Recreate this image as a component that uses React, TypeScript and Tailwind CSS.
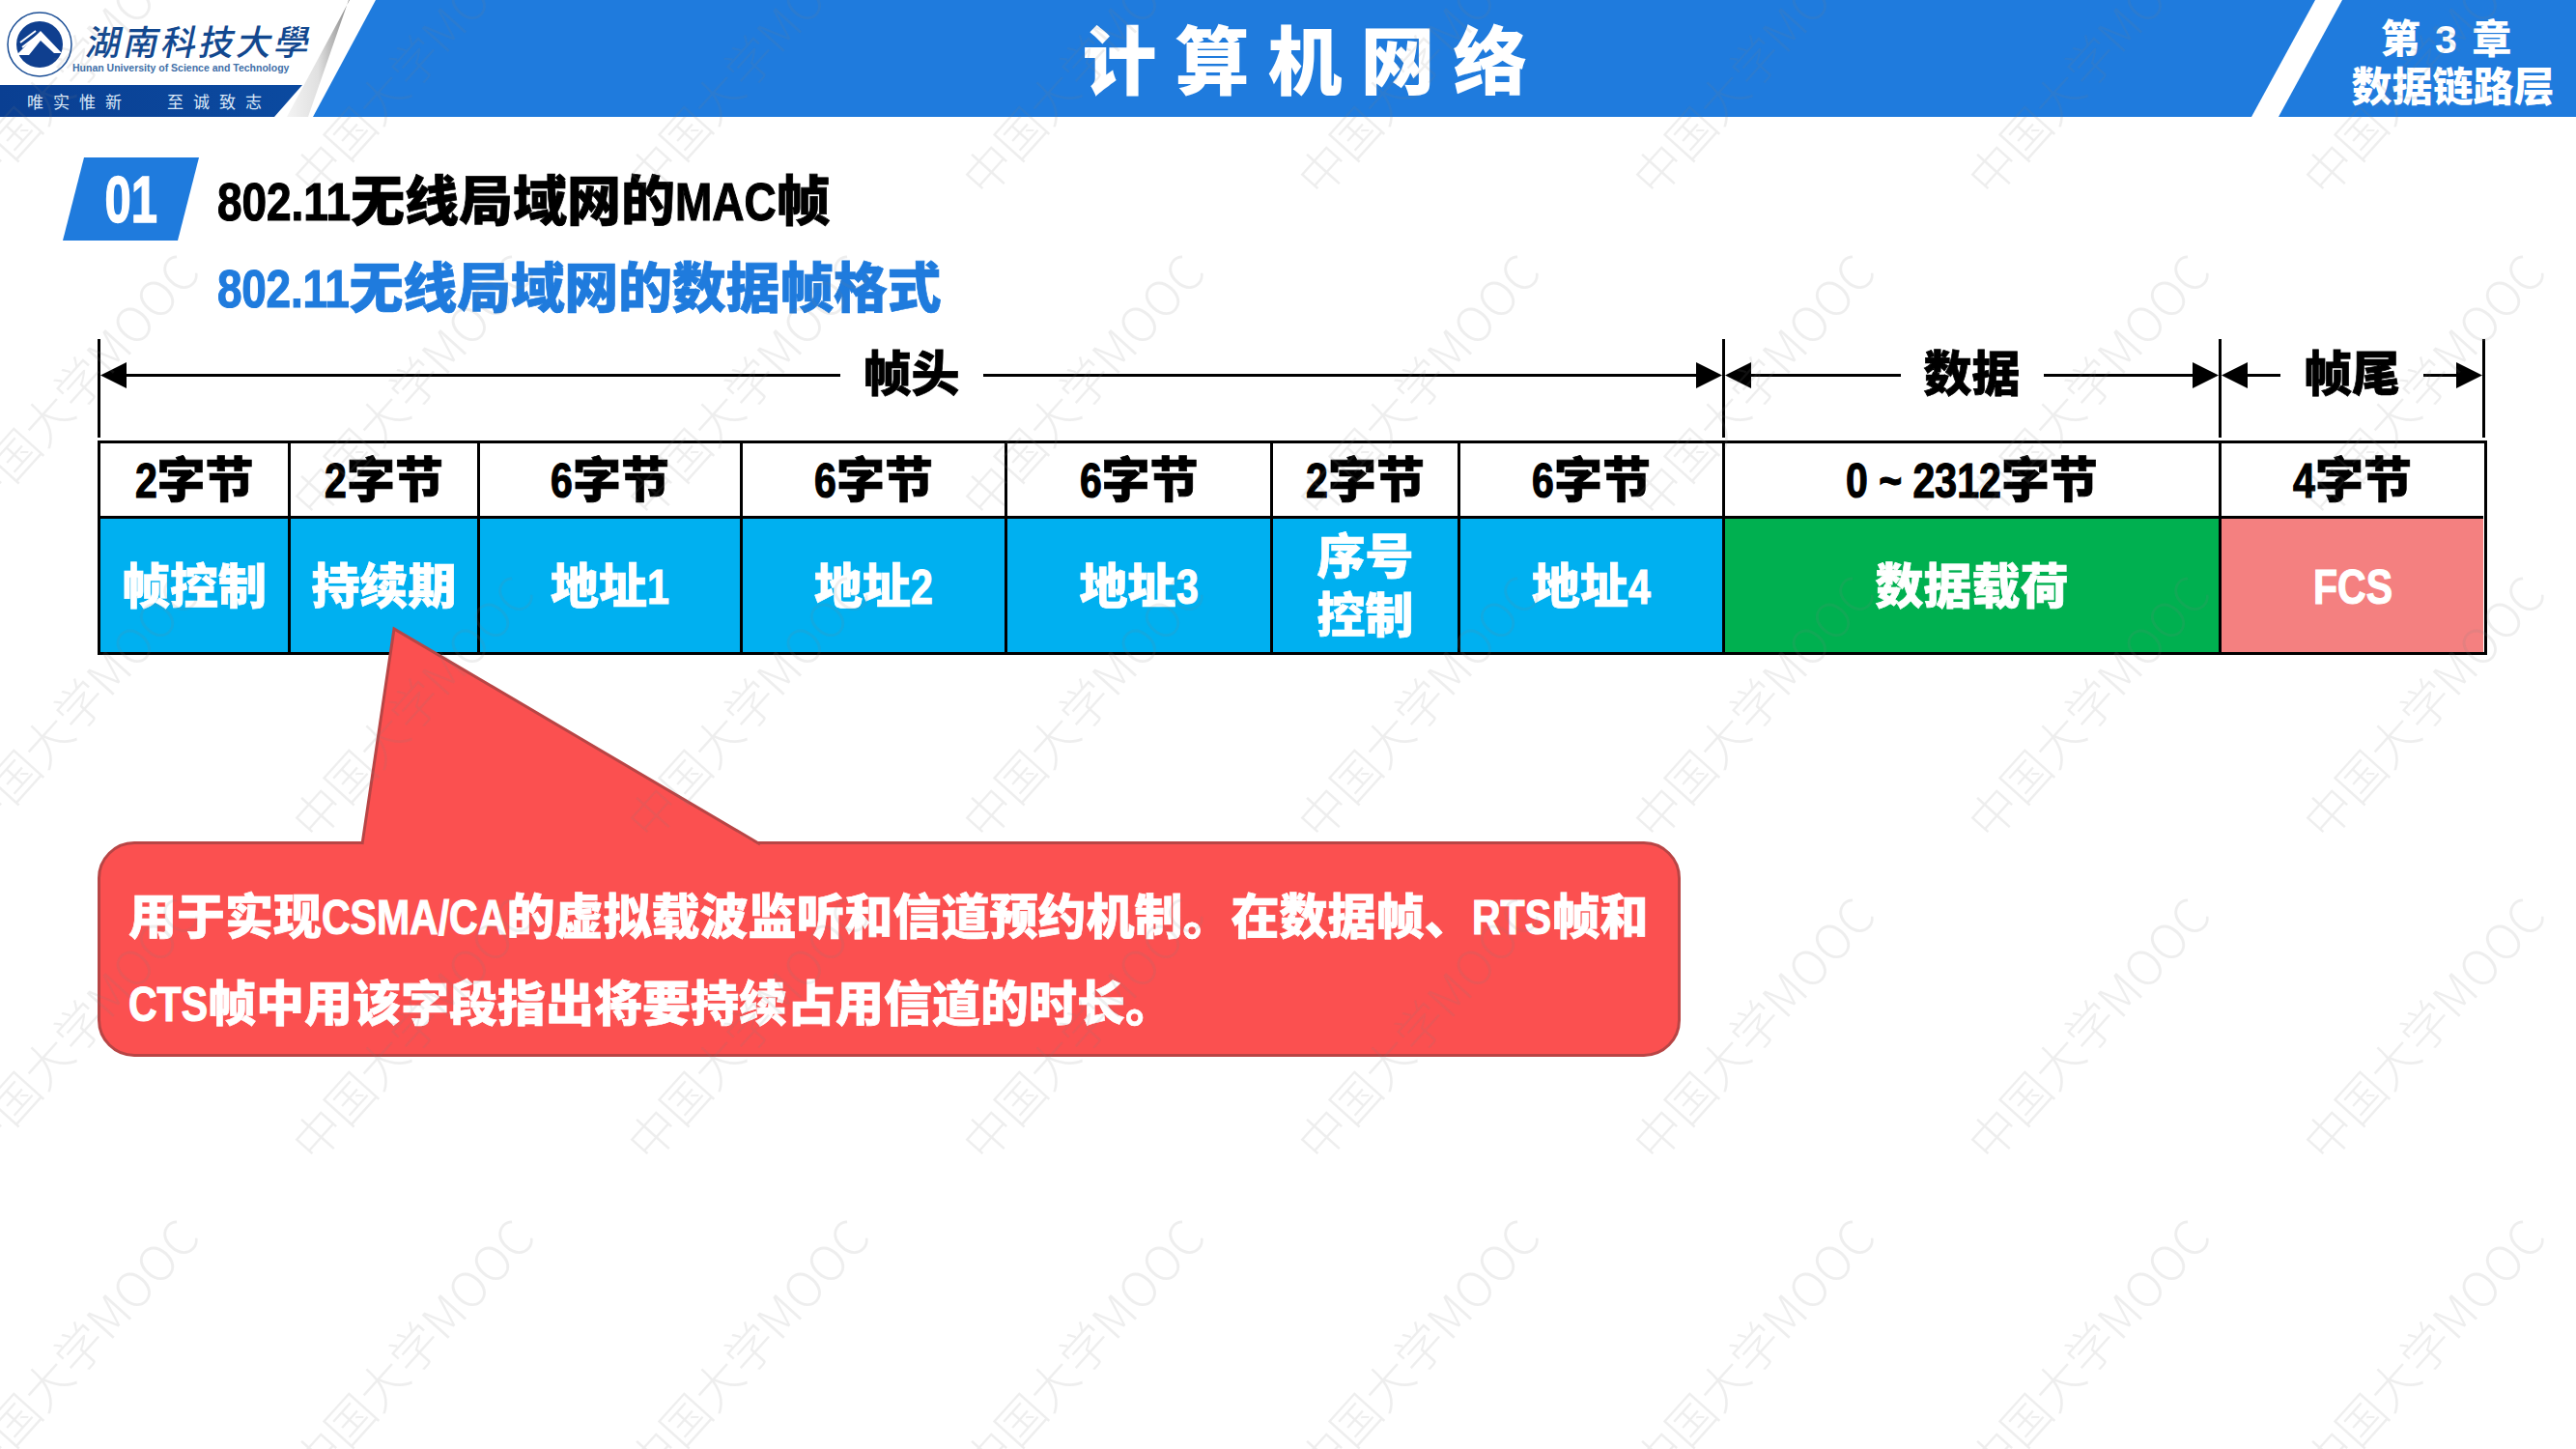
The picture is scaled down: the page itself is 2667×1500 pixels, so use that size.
// App.tsx
import React, { useLayoutEffect, useRef } from "react"

const blue = "bg-[#1f7bdd]"
const heavy = "font-black [-webkit-text-stroke:0.7px_currentColor]"

const sizes = [
    { w: "w-[197px]", label: "2字节", name: "帧控制", bg: "bg-[#00b0f0]" },
    { w: "w-[196px]", label: "2字节", name: "持续期", bg: "bg-[#00b0f0]" },
    { w: "w-[272px]", label: "6字节", name: "地址1", bg: "bg-[#00b0f0]" },
    { w: "w-[274px]", label: "6字节", name: "地址2", bg: "bg-[#00b0f0]" },
    { w: "w-[275px]", label: "6字节", name: "地址3", bg: "bg-[#00b0f0]" },
    { w: "w-[194px]", label: "2字节", name: "序号\n控制", bg: "bg-[#00b0f0]" },
    { w: "w-[274px]", label: "6字节", name: "地址4", bg: "bg-[#00b0f0]" },
    { w: "w-[514px]", label: "0 ~ 2312字节", name: "数据载荷", bg: "bg-[#00b050]" },
    { w: "w-[271px]", label: "4字节", name: "FCS", bg: "bg-[#f48080]" },
]

// latin runs in the slide are a condensed face, squeeze them and give the room back
const Narrow: React.FC<{ children: string }> = ({ children }) => {
    const ref = useRef<HTMLSpanElement>(null)
    useLayoutEffect(() => {
        if (ref.current) ref.current.style.marginRight = `${-ref.current.offsetWidth * 0.18}px`
    }, [children])
    return (
        <span ref={ref} className="inline-block origin-left scale-x-[.82] whitespace-pre [-webkit-text-stroke:1.2px_currentColor]">
            {children}
        </span>
    )
}

const Mixed: React.FC<{ text: string }> = ({ text }) => (
    <>
        {text.split(/([\x20-\x7e]+)/).map((part, i) =>
            /[\x20-\x7e]/.test(part) ? <Narrow key={i}>{part}</Narrow> : part
        )}
    </>
)

const Tri: React.FC<{ dir: "left" | "right" }> = ({ dir }) => (
    <svg width="27" height="27" viewBox="0 0 27 27" className="shrink-0">
        <polygon points={dir === "left" ? "0,13.5 27,0 27,27" : "27,13.5 0,0 0,27"} fill="#000" />
    </svg>
)

const Span: React.FC<{ w: string; label: string; last?: boolean }> = ({ w, label, last }) => (
    <div className={`${w} h-[102px] pb-[28px] flex items-center border-l-[3px] border-black ${last ? "border-r-[3px]" : ""}`}>
        <Tri dir="left" />
        <div className="flex-1 h-[3px] bg-black" />
        <span className={`px-[24px] text-[50px] leading-none ${heavy}`}>{label}</span>
        <div className="flex-1 h-[3px] bg-black" />
        <Tri dir="right" />
    </div>
)

const Logo = () => (
    <svg width="70" height="70" viewBox="0 0 70 70" className="shrink-0">
        <circle cx="35" cy="35" r="33" fill="#fff" stroke="#1c4f96" strokeWidth="1.5" />
        <circle cx="35" cy="35" r="24" fill="#0f3f8f" />
        <path d="M11 46 L36 21 L58 44 L50 44 L36 31 L24 46 Z" fill="#fff" />
        <path d="M15 33 L31 21 M17 38 L34 25" stroke="#fff" strokeWidth="2" />
    </svg>
)

export default function App() {
    const marks: { x: number; y: number }[] = []
    for (let j = 0; j < 5; j++) {
        for (let i = 0; i < 8; i++) {
            marks.push({ x: 78 + 347 * i, y: 1396 - 333 * j })
        }
    }

    return (
        <div className="relative w-[2667px] h-[1500px] overflow-hidden bg-white text-black font-['Liberation_Sans','Noto_Sans_CJK_SC',sans-serif]">
            {/* header bar */}
            <div className="relative flex h-[121px]">
                <div className="w-[324px] shrink-0 flex flex-col">
                    <div className="h-[88px] flex items-center pl-[6px] pt-[4px]">
                        <Logo />
                        <div className="-ml-[1px] flex flex-col items-start">
                            <span className="pl-[16px] text-[36px] leading-[50px] tracking-[3px] text-[#12488f] font-medium -skew-x-12 font-['Noto_Sans_CJK_SC',sans-serif] whitespace-nowrap">湖南科技大學</span>
                            <span className="-mt-[2px] text-[10.5px] leading-[12px] font-bold text-[#3f6fa8] whitespace-nowrap">Hunan University of Science and Technology</span>
                        </div>
                    </div>
                    <div className="w-[313px] h-[33px] flex items-center pl-[28px] gap-[37px] text-[17px] text-[#dbe8f7] tracking-[10px] font-['Noto_Sans_CJK_SC',sans-serif] bg-gradient-to-r from-[#0a3f92] to-[#0b4aa0] [clip-path:polygon(0_0,100%_0,284px_100%,0_100%)]">
                        <span>唯实惟新</span>
                        <span>至诚致志</span>
                    </div>
                </div>
                <div className="absolute left-[297px] top-0 w-[65px] h-[121px] bg-gradient-to-r from-[#f4f4f4] via-[#e0e0e0] to-[#888] [clip-path:polygon(100%_0,64px_0,22px_100%,0_100%)]" />
                <div className={`w-[2073px] shrink-0 flex items-center justify-center ${blue} [clip-path:polygon(65px_0,100%_0,2007px_100%,0_100%)]`}>
                    <span className="-mt-[4px] text-[77px] leading-none tracking-[19px] text-white font-black font-['Noto_Sans_CJK_SC',sans-serif]">计算机网络</span>
                </div>
                <div className={`-ml-[38px] w-[308px] shrink-0 flex flex-col items-center justify-center pt-[10px] pl-[53px] text-white font-black ${blue} [clip-path:polygon(66px_0,100%_0,100%_100%,0_100%)]`}>
                    <span className="-ml-[12px] text-[41px] leading-[50px] tracking-[2px] whitespace-pre">第 3 章</span>
                    <span className="text-[42px] leading-[50px] whitespace-nowrap">数据链路层</span>
                </div>
            </div>

            {/* section title */}
            <div className="flex items-center ml-[65px] mt-[42px]">
                <div className={`w-[141px] h-[86px] flex items-center justify-center text-white text-[68px] leading-none font-bold [-webkit-text-stroke:1.5px_currentColor] ${blue} [clip-path:polygon(22px_0,100%_0,119px_100%,0_100%)]`}>
                    <span className="inline-block scale-x-[.72]">01</span>
                </div>
                <h1 className={`ml-[19px] pt-[6px] text-[56px] leading-none whitespace-nowrap ${heavy}`}>
                    <Mixed text="802.11无线局域网的MAC帧" />
                </h1>
            </div>
            <h2 className={`ml-[225px] mt-[18px] text-[56px] leading-[64px] tracking-[-0.3px] text-[#1f7bdd] whitespace-nowrap ${heavy}`}>
                <Mixed text="802.11无线局域网的数据帧格式" />
            </h2>

            {/* span arrows */}
            <div className="flex ml-[101px] mt-[20px]">
                <Span w="w-[1682px]" label="帧头" />
                <Span w="w-[514px]" label="数据" />
                <Span w="w-[276px]" label="帧尾" last />
            </div>

            {/* frame table */}
            <div className="ml-[101px] mt-[3px] w-[2474px] flex border-[3px] border-black">
                {sizes.map((s, i) => (
                    <div key={i} className={`${s.w} shrink-0 flex flex-col ${i < sizes.length - 1 ? "border-r-[3px] border-black" : ""}`}>
                        <div className={`h-[78px] pt-[2px] flex items-center justify-center text-[50px] leading-none border-b-[3px] border-black whitespace-nowrap ${heavy}`}>
                            <span><Mixed text={s.label} /></span>
                        </div>
                        <div className={`h-[138px] pt-[4px] flex items-center justify-center text-center text-[50px] leading-[61px] text-white whitespace-pre-line ${heavy} ${s.bg}`}>
                            <span><Mixed text={s.name} /></span>
                        </div>
                    </div>
                ))}
            </div>

            {/* callout */}
            <div className={`relative ml-[101px] mt-[193px] w-[1639px] h-[223px] pt-[24px] rounded-[38px] border-[3px] border-[#b84545] bg-[#fb5050] flex items-center pl-[29px] text-[50px] leading-[90px] text-white whitespace-nowrap ${heavy}`}>
                <svg width="425" height="230" viewBox="0 0 425 230" className="absolute left-[268px] -top-[226px]">
                    <polygon points="3,229 36,3 418,229" fill="#fb5050" />
                    <polyline points="3,226 36,3 415,226" fill="none" stroke="#b84545" strokeWidth="3" />
                </svg>
                <p className="relative">
                    <Mixed text="用于实现CSMA/CA的虚拟载波监听和信道预约机制。在数据帧、RTS帧和" />
                    <br />
                    <Mixed text="CTS帧中用该字段指出将要持续占用信道的时长。" />
                </p>
            </div>

            {/* watermark */}
            <div className="absolute inset-0 pointer-events-none">
                {marks.map((m, i) => (
                    <span
                        key={i}
                        className="absolute -translate-x-1/2 -translate-y-1/2 -rotate-[48deg] text-[50px] leading-none font-light whitespace-nowrap text-[#80808022] font-['Noto_Sans_CJK_SC',sans-serif]"
                        style={{ left: m.x, top: m.y }}
                    >
                        中国大学MOOC
                    </span>
                ))}
            </div>
        </div>
    )
}
